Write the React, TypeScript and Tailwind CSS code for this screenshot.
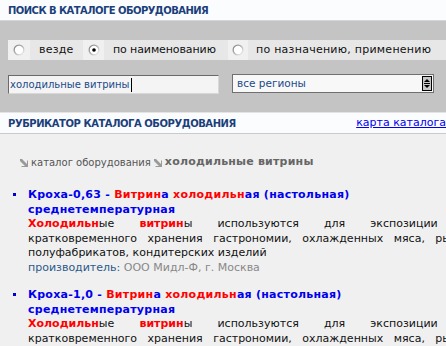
import React from "react";

const Radio = ({ checked }: { checked?: boolean }) => (
  <svg width="12" height="12" viewBox="0 0 12 12">
    <defs>
      <linearGradient id="rg" x1="0" y1="0" x2="1" y2="1">
        <stop offset="0" stopColor="#7a7a7a" />
        <stop offset="0.5" stopColor="#b0b0b0" />
        <stop offset="1" stopColor="#ffffff" />
      </linearGradient>
    </defs>
    <circle cx="6" cy="6" r="5.5" fill="url(#rg)" />
    <circle cx="6" cy="6" r="4.2" fill="#ffffff" />
    {checked && <circle cx="6" cy="6" r="1.8" fill="#000" />}
  </svg>
);

const Arrow = () => (
  <svg width="8" height="8" viewBox="0 0 8 8" className="inline-block align-middle">
    <path d="M0 0 L2 0 L7 5 L7 1.5 L8 1.5 L8 8 L1.5 8 L1.5 7 L5 7 L0 2 Z" fill="#9a9a9a" />
  </svg>
);

const R = ({ children }: { children: React.ReactNode }) => (
  <span className="text-[#ff0000]">{children}</span>
);

const Item = ({ name }: { name: string }) => (
  <div className="flex">
    <div className="w-[28px] shrink-0 relative">
      <div className="absolute left-[13px] top-[6px] w-[3px] h-[3px] bg-[#0000cc]" />
    </div>
    <div className="w-[442px]">
      <div className="font-bold text-[11px] leading-[15px] text-[#0000ee] tracking-[0.25px]">
        {name} - <R>Витрин</R>а <R>холодильн</R>ая (настольная)
        <br />
        среднетемпературная
      </div>
      <div className="text-[11px] leading-[14.7px] text-[#111]">
        <div className="text-justify [text-align-last:justify]">
          <b className="text-[#ff0000]">Холодильн</b>ые <b className="text-[#ff0000]">витрин</b>ы используются для экспозиции и
        </div>
        <div className="text-justify [text-align-last:justify]">
          кратковременного хранения гастрономии, охлажденных мяса, рыбы,
        </div>
        <div>полуфабрикатов, кондитерских изделий</div>
      </div>
    </div>
  </div>
);

export default function App() {
  return (
    <div
      className="w-[446px] h-[346px] overflow-hidden bg-[#f0f0f0]"
      style={{ fontFamily: '"DejaVu Sans", Verdana, sans-serif' }}
    >
      <div className="w-[480px]">
        <div className="h-[21px] bg-[#fbfcfe] border-b border-[#d6d6d6] flex items-center pl-2 text-[10px] font-bold text-[#1b3f7b] tracking-[-0.55px]">
          ПОИСК В КАТАЛОГЕ ОБОРУДОВАНИЯ
        </div>
        <div className="h-[91px] bg-[#c4c4c4] pl-2 pt-[19px]">
          <div className="flex h-[20px] text-[11px] text-[#111]">
            <div className="w-[22px] bg-[#f0f0f0] flex items-center justify-center">
              <Radio />
            </div>
            <div className="w-[53px] bg-[#e7e7e7] flex items-center pl-[9px] tracking-[0.2px]">везде</div>
            <div className="w-[21px] bg-[#f0f0f0] flex items-center justify-center">
              <Radio checked />
            </div>
            <div className="w-[124px] bg-[#e7e7e7] flex items-center pl-[9px] tracking-[-0.1px]">по наименованию</div>
            <div className="w-[20px] bg-[#f0f0f0] flex items-center justify-center">
              <Radio />
            </div>
            <div className="flex-1 bg-[#e7e7e7] flex items-center pl-[8px] tracking-[0.25px]">по назначению, применению</div>
          </div>
          <div className="flex items-start">
            <div className="mt-[15px] w-[211px] h-[19px] bg-[#f4f4f4] border border-t-[#6a6a6a] border-l-[#6a6a6a] border-r-[#d8d8d8] border-b-[#d8d8d8] flex items-center pl-[1px] text-[10px] text-[#1a4a8a]">
              холодильные витрины<span className="inline-block w-[1px] h-[14px] bg-black ml-[1px]" />
            </div>
            <div className="ml-[13px] mt-[14px] w-[202px] h-[19px] bg-[#f8f8f8] border border-[#707070] flex items-center justify-between pl-[4px] pr-[1px] text-[10.5px] text-[#1a4a8a]">
              <span>все регионы</span>
              <div className="w-[10px] h-[15px] border border-black bg-[#c8c8c8] flex items-center justify-center">
                <svg width="6" height="11" viewBox="0 0 6 11">
                  <path d="M3 1 L6 4 L0 4 Z" fill="#000" />
                  <rect x="0" y="5" width="6" height="1" fill="#000" />
                  <path d="M0 7 L6 7 L3 10 Z" fill="#000" />
                </svg>
              </div>
            </div>
          </div>
        </div>
        <div className="h-[1px] bg-[#e4e4e4]" />
        <div className="h-[21px] bg-[#fbfcfe] border-b border-[#cacaca] flex items-center justify-between pl-2">
          <span className="text-[10px] font-bold text-[#1b3f7b] tracking-[-0.45px]">РУБРИКАТОР КАТАЛОГА ОБОРУДОВАНИЯ</span>
          <span className="text-[11px] text-[#0000ee] underline mr-[34px]">карта каталога</span>
        </div>
        <div className="pt-[22px] pl-[20px] flex items-center h-[35px] text-[10px] text-[#555]">
          <Arrow />
          <span className="ml-[3px]">каталог оборудования</span>
          <span className="ml-[3px]"><Arrow /></span>
          <span className="ml-[3px] font-bold text-[11px] text-[#666] tracking-[0.2px]">холодильные витрины</span>
        </div>
        <div className="mt-[18px]">
          <Item name="Кроха-0,63" />
          <div className="flex text-[11px] leading-[14.7px]">
            <div className="w-[28px]" />
            <div>
              <span className="text-[#2a5a8a]">производитель: </span>
              <span className="text-[#888]">ООО Мидл-Ф, г. Москва</span>
            </div>
          </div>
        </div>
        <div className="mt-[11px]">
          <Item name="Кроха-1,0" />
        </div>
      </div>
    </div>
  );
}
